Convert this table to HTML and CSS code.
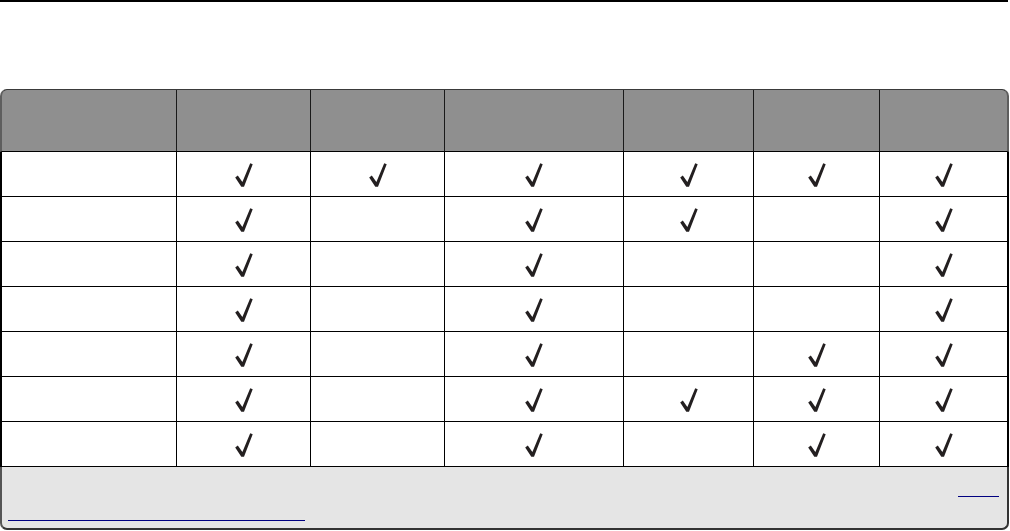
FILE: index.html
```html
<!DOCTYPE html>
<html lang="en">
<head>
<meta charset="utf-8">
<title>Table</title>
<link rel="stylesheet" href="styles.css">
</head>
<body>
<svg class="defs" width="0" height="0" aria-hidden="true">
  <symbol id="chk" viewBox="0 0 18 24">
    <polygon points="0.2,14.5 2.8,12.6 7.4,19.0 15.2,0.3 17.7,1.3 9.0,23.8 6.3,23.8" fill="#231f20"/>
  </symbol>
</svg>
<div class="rule"></div>
<div class="table">
  <div class="row head">
    <div class="cell"></div><div class="cell"></div><div class="cell"></div><div class="cell"></div><div class="cell"></div><div class="cell"></div><div class="cell"></div>
  </div>
  <div class="row">
    <div class="cell"></div>
    <div class="cell"><svg class="ck"><use href="#chk"/></svg></div>
    <div class="cell"><svg class="ck"><use href="#chk"/></svg></div>
    <div class="cell"><svg class="ck"><use href="#chk"/></svg></div>
    <div class="cell"><svg class="ck"><use href="#chk"/></svg></div>
    <div class="cell"><svg class="ck"><use href="#chk"/></svg></div>
    <div class="cell"><svg class="ck"><use href="#chk"/></svg></div>
  </div>
  <div class="row">
    <div class="cell"></div>
    <div class="cell"><svg class="ck"><use href="#chk"/></svg></div>
    <div class="cell"></div>
    <div class="cell"><svg class="ck"><use href="#chk"/></svg></div>
    <div class="cell"><svg class="ck"><use href="#chk"/></svg></div>
    <div class="cell"></div>
    <div class="cell"><svg class="ck"><use href="#chk"/></svg></div>
  </div>
  <div class="row">
    <div class="cell"></div>
    <div class="cell"><svg class="ck"><use href="#chk"/></svg></div>
    <div class="cell"></div>
    <div class="cell"><svg class="ck"><use href="#chk"/></svg></div>
    <div class="cell"></div>
    <div class="cell"></div>
    <div class="cell"><svg class="ck"><use href="#chk"/></svg></div>
  </div>
  <div class="row">
    <div class="cell"></div>
    <div class="cell"><svg class="ck"><use href="#chk"/></svg></div>
    <div class="cell"></div>
    <div class="cell"><svg class="ck"><use href="#chk"/></svg></div>
    <div class="cell"></div>
    <div class="cell"></div>
    <div class="cell"><svg class="ck"><use href="#chk"/></svg></div>
  </div>
  <div class="row">
    <div class="cell"></div>
    <div class="cell"><svg class="ck"><use href="#chk"/></svg></div>
    <div class="cell"></div>
    <div class="cell"><svg class="ck"><use href="#chk"/></svg></div>
    <div class="cell"></div>
    <div class="cell"><svg class="ck"><use href="#chk"/></svg></div>
    <div class="cell"><svg class="ck"><use href="#chk"/></svg></div>
  </div>
  <div class="row">
    <div class="cell"></div>
    <div class="cell"><svg class="ck"><use href="#chk"/></svg></div>
    <div class="cell"></div>
    <div class="cell"><svg class="ck"><use href="#chk"/></svg></div>
    <div class="cell"><svg class="ck"><use href="#chk"/></svg></div>
    <div class="cell"><svg class="ck"><use href="#chk"/></svg></div>
    <div class="cell"><svg class="ck"><use href="#chk"/></svg></div>
  </div>
  <div class="row">
    <div class="cell"></div>
    <div class="cell"><svg class="ck"><use href="#chk"/></svg></div>
    <div class="cell"></div>
    <div class="cell"><svg class="ck"><use href="#chk"/></svg></div>
    <div class="cell"></div>
    <div class="cell"><svg class="ck"><use href="#chk"/></svg></div>
    <div class="cell"><svg class="ck"><use href="#chk"/></svg></div>
  </div>
  <div class="foot">
    <div class="fline end"><a class="link short" href="#"></a></div>
    <div class="fline"><a class="link long" href="#"></a></div>
  </div>
</div>
</body>
</html>
```
FILE: styles.css
```css
html, body {
  margin: 0;
  padding: 0;
  background: #fff;
  font-family: "Liberation Sans", Arial, sans-serif;
}
.defs {
  position: absolute;
  width: 0;
  height: 0;
}
.rule {
  width: 1008px;
  height: 2px;
  background: #000;
}
.table {
  margin-top: 87px;
  width: 1009px;
}
.row {
  display: grid;
  grid-template-columns: 175px 134px 134px 179px 130px 126px 127px;
  height: 45px;
  box-sizing: border-box;
  border-left: 2px solid #000;
  border-right: 2px solid #000;
  border-bottom: 1px solid #000;
}
.cell {
  box-sizing: border-box;
  border-right: 1px solid #000;
  display: flex;
  align-items: center;
  justify-content: center;
  padding-top: 2px;
}
.cell:last-child {
  border-right: none;
}
.head {
  height: 63px;
  background: #8f8f8f;
  border-top: 1px solid #3a3a3a;
  border-left: 2px solid #5e5e5e;
  border-right: 2px solid #5e5e5e;
  border-bottom: 1px solid #000;
  border-radius: 7px 7px 0 0;
}
.head .cell {
  border-right-color: #1a1a1a;
}
.ck {
  width: 18px;
  height: 24px;
  display: block;
}
.foot {
  height: 63px;
  box-sizing: border-box;
  background: #e5e5e5;
  border-left: 2px solid #555;
  border-right: 2px solid #333;
  border-bottom: 2px solid #333;
  border-radius: 0 0 7px 7px;
  display: flex;
  flex-direction: column;
  padding: 29px 8px 0 6px;
  gap: 23px;
}
.fline {
  display: flex;
  height: 1px;
}
.fline.end {
  justify-content: flex-end;
}
.link {
  display: block;
  height: 1px;
  background: #000080;
}
.link.short {
  width: 41px;
}
.link.long {
  width: 297px;
}
```
